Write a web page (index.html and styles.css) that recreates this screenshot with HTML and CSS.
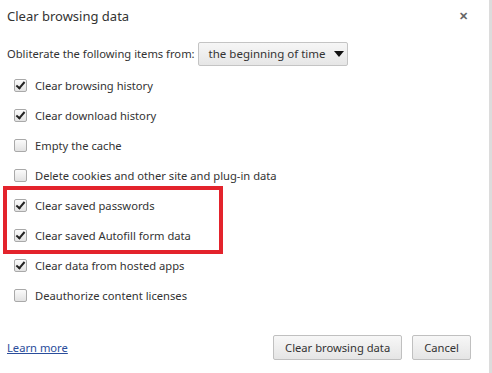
FILE: index.html
```html
<!DOCTYPE html>
<html lang="en">

<head>
    <meta charset="UTF-8">
    <title>Clear browsing data</title>
    <link rel="stylesheet" href="styles.css">
</head>

<body>
    <div class="dialog">
        <div class="header">
            <span class="title">Clear browsing data</span>
            <span class="close">&#x2715;</span>
        </div>

        <div class="range">
            <span>Obliterate the following items from:</span>
            <div class="select">
                <span>the beginning of time</span>
                <span class="arrow"></span>
            </div>
        </div>

        <ul class="items">
            <li><span class="box checked"></span>Clear browsing history</li>
            <li><span class="box checked"></span>Clear download history</li>
            <li><span class="box"></span>Empty the cache</li>
            <li><span class="box"></span>Delete cookies and other site and plug-in data</li>
            <li class="marked">
                <div class="marked-row"><span class="box checked"></span>Clear saved passwords</div>
                <div class="marked-row"><span class="box checked"></span>Clear saved Autofill form data</div>
            </li>
            <li><span class="box checked"></span>Clear data from hosted apps</li>
            <li><span class="box"></span>Deauthorize content licenses</li>
        </ul>

        <div class="footer">
            <a href="#" class="learn">Learn more</a>
            <div class="buttons">
                <button class="btn">Clear browsing data</button>
                <button class="btn">Cancel</button>
            </div>
        </div>
    </div>
</body>

</html>
```

FILE: styles.css
```css
body {
    margin: 0;
    background: #fff;
    font-family: "Noto Sans", "Open Sans", sans-serif;
    font-size: 11.2px;
    color: #333;
}

.dialog {
    width: 489px;
    height: 373px;
    border-right: 3px solid #dcdcdc;
    display: flex;
    flex-direction: column;
}

.header {
    height: 31px;
    padding: 0 21px 0 7px;
    display: flex;
    align-items: center;
    justify-content: space-between;
}

.title {
    font-size: 13px;
    color: #333;
}

.close {
    font-size: 11px;
    font-weight: bold;
    color: #666;
}

.range {
    height: 25px;
    margin-top: 10px;
    padding-left: 7px;
    display: flex;
    align-items: center;
    gap: 3px;
}

.select {
    height: 24px;
    width: 150px;
    box-sizing: border-box;
    border: 1px solid #c4c4c4;
    border-radius: 2px;
    background: linear-gradient(#f6f6f6, #e6e6e6);
    display: flex;
    align-items: center;
    padding: 0 3px 0 10px;
    white-space: nowrap;
    font-size: 11.5px;
}

.arrow {
    margin-left: auto;
    width: 0;
    height: 0;
    border-left: 5px solid transparent;
    border-right: 5px solid transparent;
    border-top: 6px solid #111;
}

.items {
    list-style: none;
    margin: 4px 0 0;
    padding: 0;
}

.items li {
    height: 30px;
    padding-left: 14px;
    display: flex;
    align-items: center;
}

.items li.marked {
    height: 60px;
    margin-left: 3px;
    width: 205px;
    padding-left: 7px;
    border: 4px solid #e3232c;
    margin-top: -4px;
    margin-bottom: -4px;
    flex-direction: column;
    align-items: flex-start;
    justify-content: center;
}

.marked-row {
    height: 30px;
    display: flex;
    align-items: center;
}

.box {
    width: 11px;
    height: 11px;
    border: 1px solid #a9a9a9;
    border-radius: 2px;
    background: linear-gradient(#fbfbfb, #e2e2e2);
    margin-right: 8px;
    position: relative;
}

.box.checked::after {
    content: "";
    position: absolute;
    left: 3px;
    top: 0px;
    width: 3px;
    height: 7px;
    border-right: 2px solid #222;
    border-bottom: 2px solid #222;
    transform: rotate(40deg);
}

.footer {
    margin-top: auto;
    height: 25px;
    margin-bottom: 13px;
    padding: 0 18px 0 7px;
    display: flex;
    align-items: center;
    justify-content: space-between;
}

.learn {
    color: #2a4d9b;
    text-decoration: underline;
}

.buttons {
    display: flex;
    gap: 10px;
}

.btn {
    font-family: inherit;
    font-size: 11.2px;
    color: #333;
    height: 25px;
    border: 1px solid #c0c0c0;
    border-radius: 2px;
    background: linear-gradient(#f7f7f7, #e5e5e5);
    padding: 0 11px;
}
```
